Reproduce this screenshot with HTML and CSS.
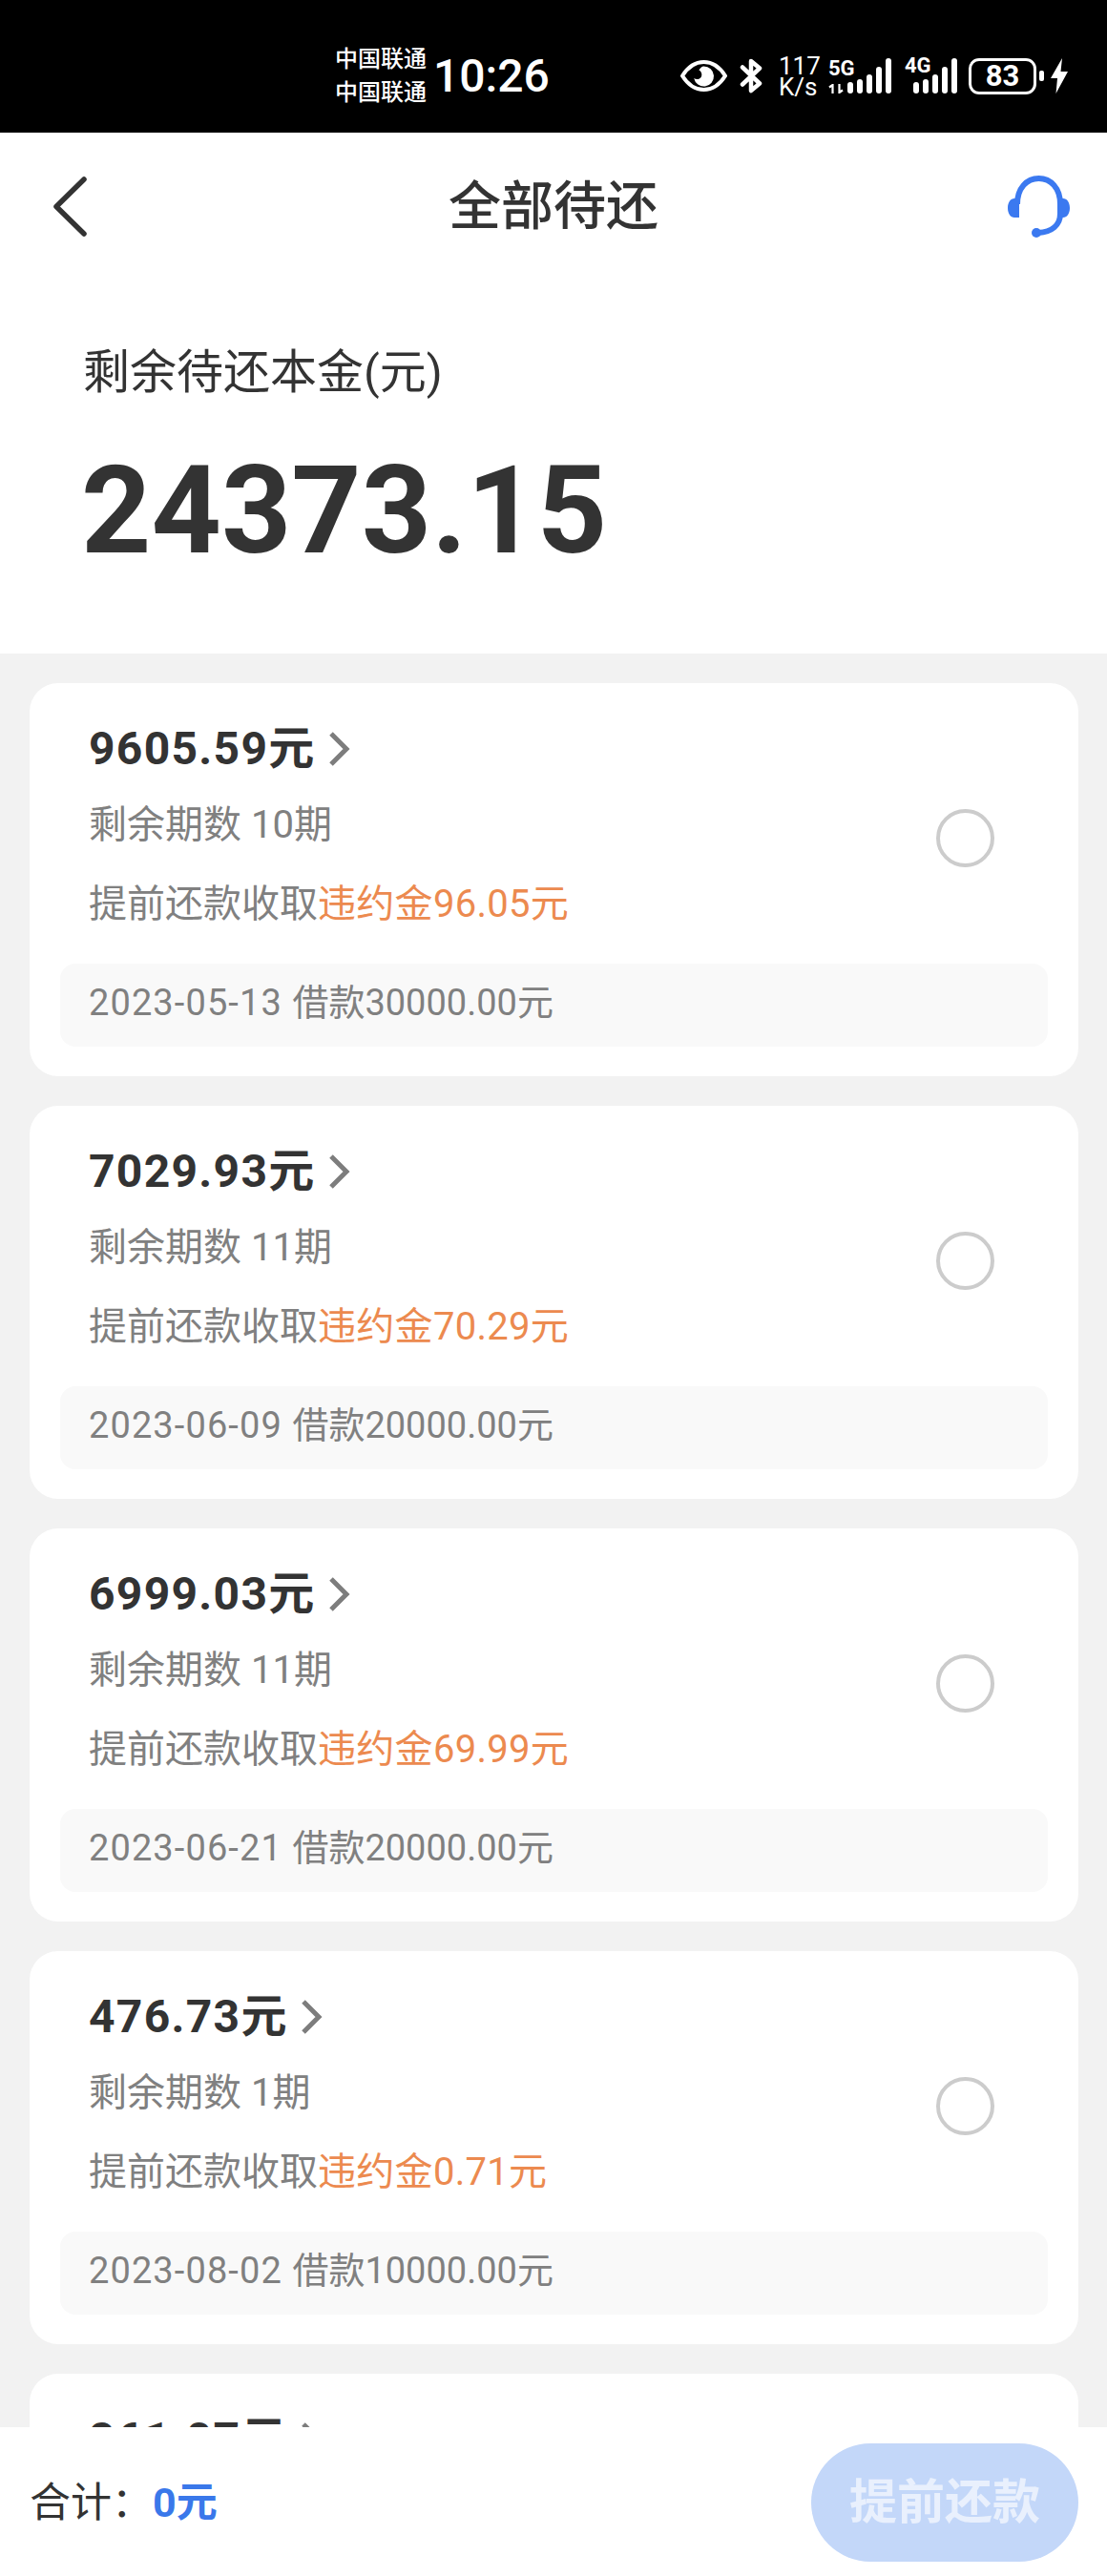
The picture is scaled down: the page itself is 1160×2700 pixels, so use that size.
FILE: index.html
```html
<!DOCTYPE html>
<html>
<head>
	<meta charset="UTF-8">
	<title>全部待还</title>
	<link rel="stylesheet" href="styles.css">
</head>
<body>
<div class="screen">
	<div class="status">
		<div class="carriers"><span>中国联通</span><span>中国联通</span></div>
		<div class="time">10:26</div>
		<svg class="eye" width="49" height="33" viewBox="0 0 49 33">
			<path d="M2 16.500C8 7 15.500 2 24.500 2S41 7 47 16.500C41 26 33.500 31 24.500 31S8 26 2 16.500Z" fill="none" stroke="#fff" stroke-width="4" stroke-linejoin="round"/>
			<path d="M24.500 6.500a10.500 10.500 0 1 1-10.300 12.500c2.300 1.800 6 1.300 7.500-1.200 1.500-2.600.3-6-2.300-7.300 1.300-2.300 3-4 5.100-4Z" fill="#fff"/>
		</svg>
		<svg class="bt" width="24" height="37" viewBox="0 0 24 37">
			<path d="M3 9.500 21 26.500 12 34V3L21 10.500 3 27.500" fill="none" stroke="#fff" stroke-width="4.500" stroke-linejoin="round" stroke-linecap="round"/>
		</svg>
		<div class="speed"><span>117</span><span>K/s</span></div>
		<div class="cell cell-5g">
			<div class="net">
				<span class="net-name">5G</span>
				<svg width="16" height="10" viewBox="0 0 16 10">
					<path d="M4.500 10V1L1 3.500M11.500 0V9L15 6.500" fill="none" stroke="#fff" stroke-width="2.200"/>
				</svg>
			</div>
			<div class="bars">
				<i class="b1"></i><i class="b2"></i><i class="b3"></i><i class="b4"></i><i class="b5"></i>
			</div>
		</div>
		<div class="cell cell-4g">
			<span class="net-name">4G</span>
			<div class="bars">
				<i class="b1"></i><i class="b2"></i><i class="b3"></i><i class="b4"></i><i class="b5"></i>
			</div>
		</div>
		<div class="battery">83</div>
		<div class="nub"></div>
		<svg class="bolt" width="18" height="37" viewBox="0 0 18 37">
			<path d="M12 0 0 21H7L5.500 37 18 14H10.500Z" fill="#fff"/>
		</svg>
	</div>

	<div class="nav">
		<svg class="back" width="37" height="63" viewBox="0 0 37 63">
			<path d="M33 3 4 31.500 33 60" fill="none" stroke="#333" stroke-width="5.500" stroke-linecap="round" stroke-linejoin="round"/>
		</svg>
		<h1 class="title">全部待还</h1>
		<svg class="service" width="65" height="65" viewBox="0 0 65 65">
			<path d="M10 30C10 13 20 3 32.500 3S55 13 55 30V40C55 52 46 59 32 60" fill="none" stroke="#3b79f0" stroke-width="6"/>
			<path d="M12 24V44H7C3 44 0 40 0 34S3 24 7 24ZM52 24H58C62 24 65 28 65 34S62 44 58 44H52Z" fill="#3b79f0"/>
			<circle cx="30" cy="60" r="5" fill="#3b79f0"/>
		</svg>
	</div>

	<div class="summary">
		<div class="summary-label">剩余待还本金(元)</div>
		<div class="summary-num">24373.15</div>
	</div>

	<div class="list">
		<div class="card">
			<div class="card-top">
				<div class="card-main">
					<div class="amount">9605.59元<svg class="arrow" width="24" height="38" viewBox="0 0 24 38"><path d="M4 3 20 19 4 35" fill="none" stroke="#7d7d7d" stroke-width="5"/></svg></div>
					<div class="terms">剩余期数 10期</div>
					<div class="fee">提前还款收取<span class="fee-num">违约金96.05元</span></div>
				</div>
				<div class="radio"></div>
			</div>
			<div class="loan"><span class="loan-date">2023-05-13 </span>借款30000.00元</div>
		</div>
		<div class="card">
			<div class="card-top">
				<div class="card-main">
					<div class="amount">7029.93元<svg class="arrow" width="24" height="38" viewBox="0 0 24 38"><path d="M4 3 20 19 4 35" fill="none" stroke="#7d7d7d" stroke-width="5"/></svg></div>
					<div class="terms">剩余期数 11期</div>
					<div class="fee">提前还款收取<span class="fee-num">违约金70.29元</span></div>
				</div>
				<div class="radio"></div>
			</div>
			<div class="loan"><span class="loan-date">2023-06-09 </span>借款20000.00元</div>
		</div>
		<div class="card">
			<div class="card-top">
				<div class="card-main">
					<div class="amount">6999.03元<svg class="arrow" width="24" height="38" viewBox="0 0 24 38"><path d="M4 3 20 19 4 35" fill="none" stroke="#7d7d7d" stroke-width="5"/></svg></div>
					<div class="terms">剩余期数 11期</div>
					<div class="fee">提前还款收取<span class="fee-num">违约金69.99元</span></div>
				</div>
				<div class="radio"></div>
			</div>
			<div class="loan"><span class="loan-date">2023-06-21 </span>借款20000.00元</div>
		</div>
		<div class="card">
			<div class="card-top">
				<div class="card-main">
					<div class="amount">476.73元<svg class="arrow" width="24" height="38" viewBox="0 0 24 38"><path d="M4 3 20 19 4 35" fill="none" stroke="#7d7d7d" stroke-width="5"/></svg></div>
					<div class="terms">剩余期数 1期</div>
					<div class="fee">提前还款收取<span class="fee-num">违约金0.71元</span></div>
				</div>
				<div class="radio"></div>
			</div>
			<div class="loan"><span class="loan-date">2023-08-02 </span>借款10000.00元</div>
		</div>
		<div class="card">
			<div class="card-top">
				<div class="card-main">
					<div class="amount">261.07元<svg class="arrow" width="24" height="38" viewBox="0 0 24 38"><path d="M4 3 20 19 4 35" fill="none" stroke="#7d7d7d" stroke-width="5"/></svg></div>
				</div>
			</div>
		</div>
	</div>

	<div class="footer">
		<div class="total">合计：<span class="total-num">0元</span></div>
		<div class="pay-btn">提前还款</div>
	</div>
</div>
</body>
</html>
```

FILE: styles.css
```css
html,body{margin:0;padding:0;}
body{font-family:Roboto,"Noto Sans CJK SC",sans-serif;color:#333;background:#fff;}
.screen{width:1160px;height:2700px;display:flex;flex-direction:column;overflow:hidden;}

.status{flex:none;height:139px;box-sizing:border-box;padding:22px 41px 0 351px;background:#000;color:#fff;display:flex;align-items:center;}
.carriers{display:flex;flex-direction:column;font-size:24px;line-height:35px;font-weight:500;margin-top:-1px;width:96px;}
.time{font-size:48px;font-weight:500;margin-left:7px;width:120px;line-height:60px;margin-top:-2px;}
.eye{margin-left:139px;margin-top:-2px;}
.bt{margin-left:13px;margin-top:-2px;}
.speed{display:flex;flex-direction:column;font-size:26px;line-height:22px;margin-left:17px;width:38px;margin-top:-2px;}
.cell{display:flex;align-items:flex-end;height:37px;margin-top:-2px;}
.cell-5g{margin-left:14px;width:66px;}
.cell-4g{margin-left:14px;width:53px;}
.net{display:flex;flex-direction:column;justify-content:space-between;height:34px;width:20px;}
.net-name{font-size:22px;line-height:16px;font-weight:700;}
.cell-4g .net-name{align-self:flex-start;}
.bars{display:flex;align-items:flex-end;gap:4px;height:37px;}
.cell-4g .bars{margin-left:-19px;}
.bars i{display:block;width:6px;background:#fff;border-radius:3px;}
.b1{height:12px;}
.b2{height:15px;}
.b3{height:20px;}
.b4{height:28px;}
.b5{height:37px;}
.battery{box-sizing:border-box;width:71px;height:38px;border:3px solid #fff;border-radius:11px;font-size:31px;font-weight:700;line-height:32px;text-align:center;margin-left:14px;margin-top:-2px;}
.nub{width:5px;height:11px;background:#fff;border-radius:2px;margin-left:3px;margin-top:-2px;}
.bolt{margin-left:7px;margin-top:-2px;}

.nav{flex:none;height:126px;box-sizing:border-box;padding:28px 39px 0;display:grid;grid-template-columns:1fr auto 1fr;align-items:center;}
.back{margin-left:16px;}
.title{margin:0;font-size:55px;font-weight:500;line-height:70px;color:#333;}
.service{justify-self:end;}

.summary{flex:none;height:420px;box-sizing:border-box;padding:0 0 0 87px;background:#fff;}
.summary-label{font-size:49px;line-height:60px;padding-top:96px;color:#333;}
.summary-num{font-size:128px;font-weight:700;line-height:130px;margin-top:49px;margin-left:-2px;color:#333;}

.list{flex:1;min-height:0;overflow:hidden;background:#f2f2f2;box-sizing:border-box;padding:31px 30px 0 31px;display:flex;flex-direction:column;gap:31px;}
.card{flex:none;height:412px;box-sizing:border-box;padding:37px 32px 0;background:#fff;border-radius:30px;}
.card-top{display:flex;justify-content:space-between;padding-left:30px;}
.amount{height:64px;font-size:48px;font-weight:700;line-height:64px;letter-spacing:1.3px;color:#333;display:flex;align-items:center;}
.arrow{margin-left:12px;}
.terms{margin-top:20px;font-size:40px;line-height:56px;color:#808080;}
.fee{margin-top:27px;font-size:40px;line-height:56px;color:#808080;}
.fee-num{color:#ec8a4f;letter-spacing:.3px;}
.radio{box-sizing:border-box;width:61px;height:61px;margin:95px 56px 0 0;border:4px solid #ccc;border-radius:50%;}
.loan{height:87px;box-sizing:border-box;margin-top:34px;padding-left:30px;background:#f9f9f9;border-radius:16px;font-size:38px;line-height:83px;color:#808080;}
.loan-date{letter-spacing:1.1px;}

.footer{flex:none;height:156px;box-sizing:border-box;padding:17px 30px 15px 31px;background:#fff;display:flex;align-items:center;justify-content:space-between;}
.total{font-size:43px;line-height:60px;color:#333;}
.total-num{font-weight:700;color:#3a78ea;}
.pay-btn{width:280px;height:124px;border-radius:62px;background:#c3d7f9;color:#e9f0fd;font-size:50px;font-weight:700;line-height:124px;text-align:center;}
```
